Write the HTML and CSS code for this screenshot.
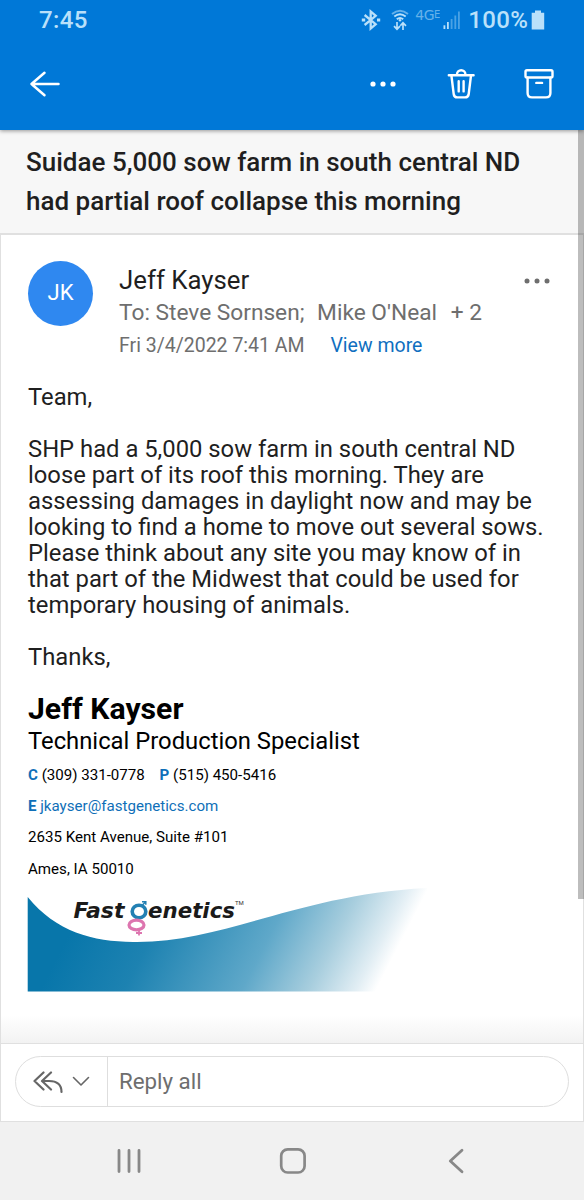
FILE: index.html
```html
<!DOCTYPE html>
<html lang="en">
<head>
  <meta charset="UTF-8" />
  <meta name="viewport" content="width=device-width, initial-scale=1.0"/>
  <title>Suidae 5,000 sow farm in south central ND</title>
  <link rel="stylesheet" href="styles.css">
</head>
<body>
  <header>
    <div class="status-bar">
      <span class="clock">7:45</span>
      <svg class="bluetooth" width="20" height="22" viewBox="0 0 20 22" fill="none" stroke="currentColor" stroke-width="2.3">
        <path d="M3.6 6 14.7 15.2 9.7 19.5V2.5l5 4.3L3.6 16"/>
        <path d="M.8 11h3.4M16 11h3.2" stroke-width="3.2"/>
      </svg>
      <svg class="wifi" width="18" height="22" viewBox="0 0 18 22" fill="none" stroke="currentColor" stroke-width="1.9">
        <path d="M1 5Q9-1.7 17 5" opacity=".55"/>
        <path d="M3.3 7.6Q9 3 14.7 7.6M5.8 10.2Q9 7.6 12.2 10.2"/>
        <circle cx="9" cy="11.3" r="1.2" fill="currentColor" stroke="none"/>
        <path d="M6 13v7M3 17.2l3 3 3-3M12 21v-7M9.3 16.8l2.7-3 3 3" stroke-width="1.7"/>
      </svg>
      <span class="network">4G<small>E</small></span>
      <svg class="signal" width="18" height="20" viewBox="0 0 18 20" fill="currentColor">
        <rect x="0.5" y="15.3" width="1.8" height="3.7"/>
        <rect x="4" y="12" width="1.8" height="7"/>
        <rect x="7.7" y="9" width="1.8" height="10" opacity=".4"/>
        <rect x="11.4" y="5.5" width="1.8" height="13.5" opacity=".4"/>
        <rect x="15" y="1.5" width="1.8" height="17.5" opacity=".4"/>
      </svg>
      <span class="percent">100%</span>
      <svg class="battery" width="14" height="20" viewBox="0 0 14 20" fill="currentColor">
        <path d="M4 0.5h6v2.3h3.2V19.5H.7V2.8H4z"/>
      </svg>
    </div>
    <div class="toolbar">
      <svg class="back" width="32" height="28" viewBox="0 0 32 28" fill="none" stroke="#fff" stroke-width="2.5" stroke-linecap="round" stroke-linejoin="round">
        <path d="M29.5 14H2.5M15.5 2.8 2.5 14 15.5 25.2"/>
      </svg>
      <svg class="more" width="28" height="8" viewBox="0 0 28 8" fill="#fff">
        <circle cx="4" cy="4" r="2.6"/><circle cx="14" cy="4" r="2.6"/><circle cx="24" cy="4" r="2.6"/>
      </svg>
      <svg class="trash" width="28" height="32" viewBox="0 0 28 32" fill="none" stroke="#fff" stroke-width="2.4" stroke-linecap="round" stroke-linejoin="round">
        <path d="M1.8 7.3h24.8M10 7V6.2a4.2 4 0 0 1 8.4 0V7M4.4 7.5 6.7 26q.4 3.4 3.6 3.4h7.8q3.2 0 3.6-3.4L24 7.5M11.7 13.2v10.2M16.6 13.2v10.2"/>
      </svg>
      <svg class="archive" width="30" height="32" viewBox="0 0 30 32" fill="none" stroke="#fff" stroke-width="2.4" stroke-linecap="round" stroke-linejoin="round">
        <rect x="1.5" y="2.3" width="27" height="7.2" rx="1.5"/>
        <path d="M3.6 9.8V25q0 4.4 4.4 4.4h14q4.4 0 4.4-4.4V9.8M12.3 14.9h5.8"/>
      </svg>
    </div>
  </header>

  <h1 class="subject">Suidae 5,000 sow farm in south central ND<br>had partial roof collapse this morning</h1>
  <div class="scroll-thumb"></div>

  <main class="message">
    <div class="sender">
      <div class="avatar">JK</div>
      <div class="details">
        <div class="name">Jeff Kayser</div>
        <div class="recipients">To: Steve Sornsen; <span class="second">Mike O'Neal</span> <span class="extra">+ 2</span></div>
        <div class="date">Fri 3/4/2022 7:41 AM <a class="view-more">View more</a></div>
      </div>
      <svg class="options" width="28" height="8" viewBox="0 0 28 8" fill="#6e6e6e">
        <circle cx="4" cy="4" r="2.5"/><circle cx="14" cy="4" r="2.5"/><circle cx="24" cy="4" r="2.5"/>
      </svg>
    </div>

    <div class="text">
      <p>Team,</p>
      <p>SHP had a 5,000 sow farm in south central ND<br>
        loose part of its roof this morning. They are<br>
        assessing damages in daylight now and may be<br>
        looking to find a home to move out several sows.<br>
        Please think about any site you may know of in<br>
        that part of the Midwest that could be used for<br>
        temporary housing of animals.</p>
      <p>Thanks,</p>
    </div>

    <div class="signature">
      <h2>Jeff Kayser</h2>
      <div class="job">Technical Production Specialist</div>
      <div class="contact"><b>C</b> (309) 331-0778 <b class="phone">P</b> (515) 450-5416</div>
      <div class="contact"><b>E</b> <a class="email">jkayser@fastgenetics.com</a></div>
      <div class="contact">2635 Kent Avenue, Suite #101</div>
      <div class="contact">Ames, IA 50010</div>
      <svg class="logo" width="400" height="108" viewBox="0 0 400 108">
        <defs>
          <linearGradient id="wave" gradientUnits="userSpaceOnUse" x1="53" y1="28" x2="318" y2="165">
            <stop offset="0" stop-color="#0876aa"/>
            <stop offset=".25" stop-color="#1d82b1"/>
            <stop offset=".6" stop-color="#5fa8c9"/>
            <stop offset=".8" stop-color="#a8cede"/>
            <stop offset=".94" stop-color="#e2eef4"/>
            <stop offset="1" stop-color="#fff"/>
          </linearGradient>
        </defs>
        <path fill="url(#wave)" d="M.7 12C29 47 66 56.500 106 57C196 58.500 268 10 400 3V106.500H.7z"/>
        <text x="46.500" y="33" class="brand" textLength="51" lengthAdjust="spacingAndGlyphs">Fast</text>
        <text x="121" y="33" class="brand" textLength="87" lengthAdjust="spacingAndGlyphs">enetics</text>
        <text x="208" y="20" class="tm">TM</text>
        <g fill="none" stroke-width="3.6">
          <ellipse cx="112" cy="26.500" rx="6.800" ry="6.300" stroke="#2380b3"/>
          <path d="M115.500 20 118 17.500M115 16.800h3.800v3" stroke="#2380b3" stroke-width="1.500"/>
          <ellipse cx="109.500" cy="40" rx="7.500" ry="4.800" stroke="#dd75af" stroke-width="3.200"/>
          <path d="M112 44v6.500M109 48h6" stroke="#dd75af" stroke-width="1.800"/>
        </g>
      </svg>
    </div>
  </main>

  <div class="reply-bar">
    <div class="reply-box">
      <div class="reply-type">
        <svg width="30" height="24" viewBox="0 0 30 24" fill="none" stroke="#666" stroke-width="2.2" stroke-linecap="round" stroke-linejoin="round">
          <path d="M10.5 2.5 1.5 11l9 8.5M18 2.5 9 11l9 8.5M9.5 11H16q12.5 0 12.5 11"/>
        </svg>
        <svg width="18" height="11" viewBox="0 0 18 11" fill="none" stroke="#666" stroke-width="1.6" stroke-linecap="round" stroke-linejoin="round">
          <path d="M1.5 1.5 9 9l7.5-7.5"/>
        </svg>
      </div>
      <div class="reply-input">Reply all</div>
    </div>
  </div>

  <nav>
    <svg width="26" height="26" viewBox="0 0 26 26" fill="none" stroke="#888" stroke-width="2.8" stroke-linecap="round">
      <path d="M3 2.4v21.2M13 2.4v21.2M23 2.4v21.2"/>
    </svg>
    <svg class="home" width="28" height="28" viewBox="0 0 28 28" fill="none" stroke="#888" stroke-width="2.7">
      <rect x="2.2" y="2.3" width="23.4" height="23.2" rx="6.5"/>
    </svg>
    <svg width="18" height="26" viewBox="0 0 18 26" fill="none" stroke="#888" stroke-width="2.8" stroke-linecap="round" stroke-linejoin="round">
      <path d="M15 2.3 3.3 13 15 23.7"/>
    </svg>
  </nav>
</body>
</html>
```
FILE: styles.css
```css
* {
  box-sizing: border-box;
}

body {
  margin: 0;
  width: 584px;
  height: 1200px;
  position: relative;
  display: flex;
  flex-direction: column;
  overflow: hidden;
  font-family: Roboto, "Liberation Sans", sans-serif;
  color: #1f1f1f;
  background: #fff;
}

svg {
  display: block;
  flex: none;
}

header {
  height: 130px;
  flex: none;
  background: #0078d7;
  box-shadow: 0 1px 4px rgba(0, 0, 0, 0.4);
  position: relative;
  z-index: 2;
}

.status-bar {
  display: flex;
  align-items: center;
  height: 40px;
  padding: 0 39px;
  color: #b9e0fa;
  font-size: 24px;
  white-space: nowrap;
}

.clock {
  letter-spacing: 0.4px;
  font-weight: 500;
  width: 323px;
}

.wifi {
  margin-left: 10px;
}

.network {
  width: 34px;
  padding-left: 6px;
  margin-top: -10px;
  font-family: "DejaVu Sans", sans-serif;
  font-size: 14px;
  line-height: 15px;
  letter-spacing: -0.5px;
  opacity: 0.55;
}

.network small {
  font-size: 10px;
  vertical-align: 2px;
}

.percent {
  width: 63px;
  margin-left: 7px;
  letter-spacing: 0.4px;
  font-weight: 500;
}

.toolbar {
  display: flex;
  align-items: center;
  height: 88px;
  padding: 0 30px 0 29px;
}

.more {
  margin-left: auto;
}

.trash {
  margin-left: 50px;
}

.archive {
  margin-left: 49px;
}

.subject {
  flex: none;
  height: 105px;
  margin: 0;
  padding: 13px 26px 0;
  background: #f7f7f7;
  border-bottom: 2px solid #e0e0e0;
  font-size: 26px;
  line-height: 39px;
  font-weight: 500;
  white-space: nowrap;
}

/* lies over the subject and the message */
.scroll-thumb {
  position: absolute;
  top: 130px;
  right: 0;
  width: 6px;
  height: 769px;
  background: rgba(0, 0, 0, 0.26);
  z-index: 1;
}

.message {
  height: 809px;
  flex: none;
  padding: 26px 32px 0 27px;
  border: 0 solid #e0e0e0;
  border-width: 0 1px 0 1px;
  background: linear-gradient(#fff 780px, #f2f2f2);
  white-space: nowrap;
}

.sender {
  display: flex;
  height: 123px;
}

.avatar {
  width: 65px;
  height: 65px;
  flex: none;
  border-radius: 50%;
  background: #2f88f0;
  color: #fff;
  font-size: 22px;
  line-height: 64px;
  text-align: center;
}

.details {
  flex: 1;
  padding-left: 26px;
  color: #6e6e6e;
}

.name {
  height: 35px;
  line-height: 39px;
  font-size: 25.8px;
  color: #1f1f1f;
}

.recipients {
  height: 33px;
  line-height: 33px;
  font-size: 22.7px;
}

.second {
  margin-left: 7px;
}

.extra {
  margin-left: 8px;
}

.date {
  height: 33px;
  line-height: 33px;
  font-size: 19.5px;
}

.view-more {
  margin-left: 21px;
  color: #0f6fc0;
}

.options {
  margin-top: 16px;
}

.text {
  font-size: 23.8px;
  line-height: 26px;
}

.text p {
  margin: 0 0 26px;
}

.signature {
  margin-top: -4px;
  color: #000;
}

.signature h2 {
  margin: 0;
  font-size: 30.2px;
  line-height: 34px;
}

.job {
  height: 33.5px;
  font-size: 23.8px;
  line-height: 30px;
}

.contact {
  height: 31.4px;
  font-size: 15.1px;
  line-height: 31.4px;
}

.contact b,
.email {
  color: #0f6fb8;
}

.phone {
  margin-left: 11px;
}

.logo {
  margin-left: -1px;
}

.brand {
  font-family: "DejaVu Sans", sans-serif;
  font-size: 21px;
  font-weight: bold;
  font-style: italic;
  fill: #1a1a1a;
}

.tm {
  font-size: 6px;
  fill: #333;
}

.reply-bar {
  height: 79px;
  flex: none;
  margin-top: -1px;
  padding: 12px 14px 0 14px;
  border: 1px solid #e0e0e0;
  background: #fff;
}

.reply-box {
  display: flex;
  height: 51px;
  border: 1px solid #dedede;
  border-radius: 26px;
}

.reply-type {
  display: flex;
  align-items: center;
  gap: 9px;
  width: 92px;
  padding-left: 17px;
  border-right: 1px solid #dedede;
}

.reply-input {
  padding-left: 11px;
  font-size: 22.3px;
  line-height: 48px;
  color: #6e6e6e;
}

nav {
  flex: 1;
  display: flex;
  justify-content: space-between;
  align-items: center;
  padding: 0 119px 0 116px;
  background: #f1f1f1;
}

.home {
  margin-right: 4px;
}
```
